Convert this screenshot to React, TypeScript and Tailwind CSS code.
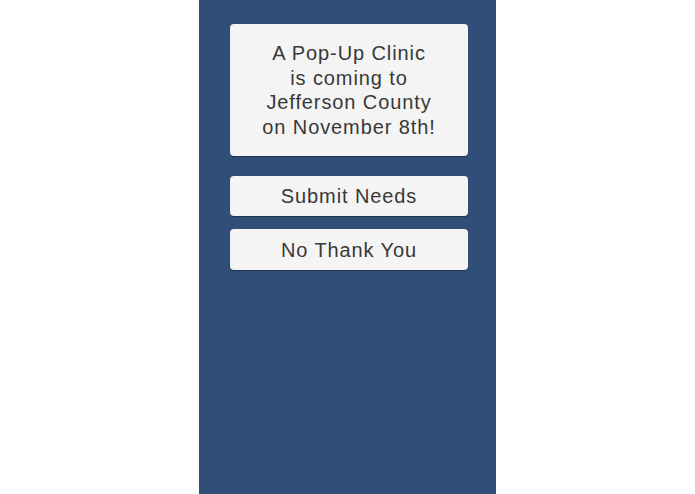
export default function App() {
  return (
    <div className="flex h-[494px] w-full justify-center bg-white font-['Liberation_Sans',Arial,sans-serif]">
      <div className="flex h-full w-[297px] flex-col bg-[#314e78] pl-[31px] pt-[24px]">
        <div className="flex h-[132px] w-[238px] items-center justify-center rounded-[4px] bg-[#f4f4f4] text-center text-[20px] leading-[24.5px] tracking-[0.9px] text-[#383838] shadow-[0_1px_1px_rgba(0,0,0,0.35)]">
          <p>
            A Pop-Up Clinic
            <br />
            is coming to
            <br />
            Jefferson County
            <br />
            on November 8th!
          </p>
        </div>
        <button
          type="button"
          className="mt-[20px] h-[40px] w-[238px] rounded-[4px] bg-[#f4f4f4] text-[20px] tracking-[0.9px] text-[#383838] shadow-[0_1px_1px_rgba(0,0,0,0.35)]"
        >
          Submit Needs
        </button>
        <button
          type="button"
          className="mt-[13px] h-[41px] w-[238px] rounded-[4px] bg-[#f4f4f4] text-[20px] tracking-[0.9px] text-[#383838] shadow-[0_1px_1px_rgba(0,0,0,0.35)]"
        >
          No Thank You
        </button>
      </div>
    </div>
  );
}
